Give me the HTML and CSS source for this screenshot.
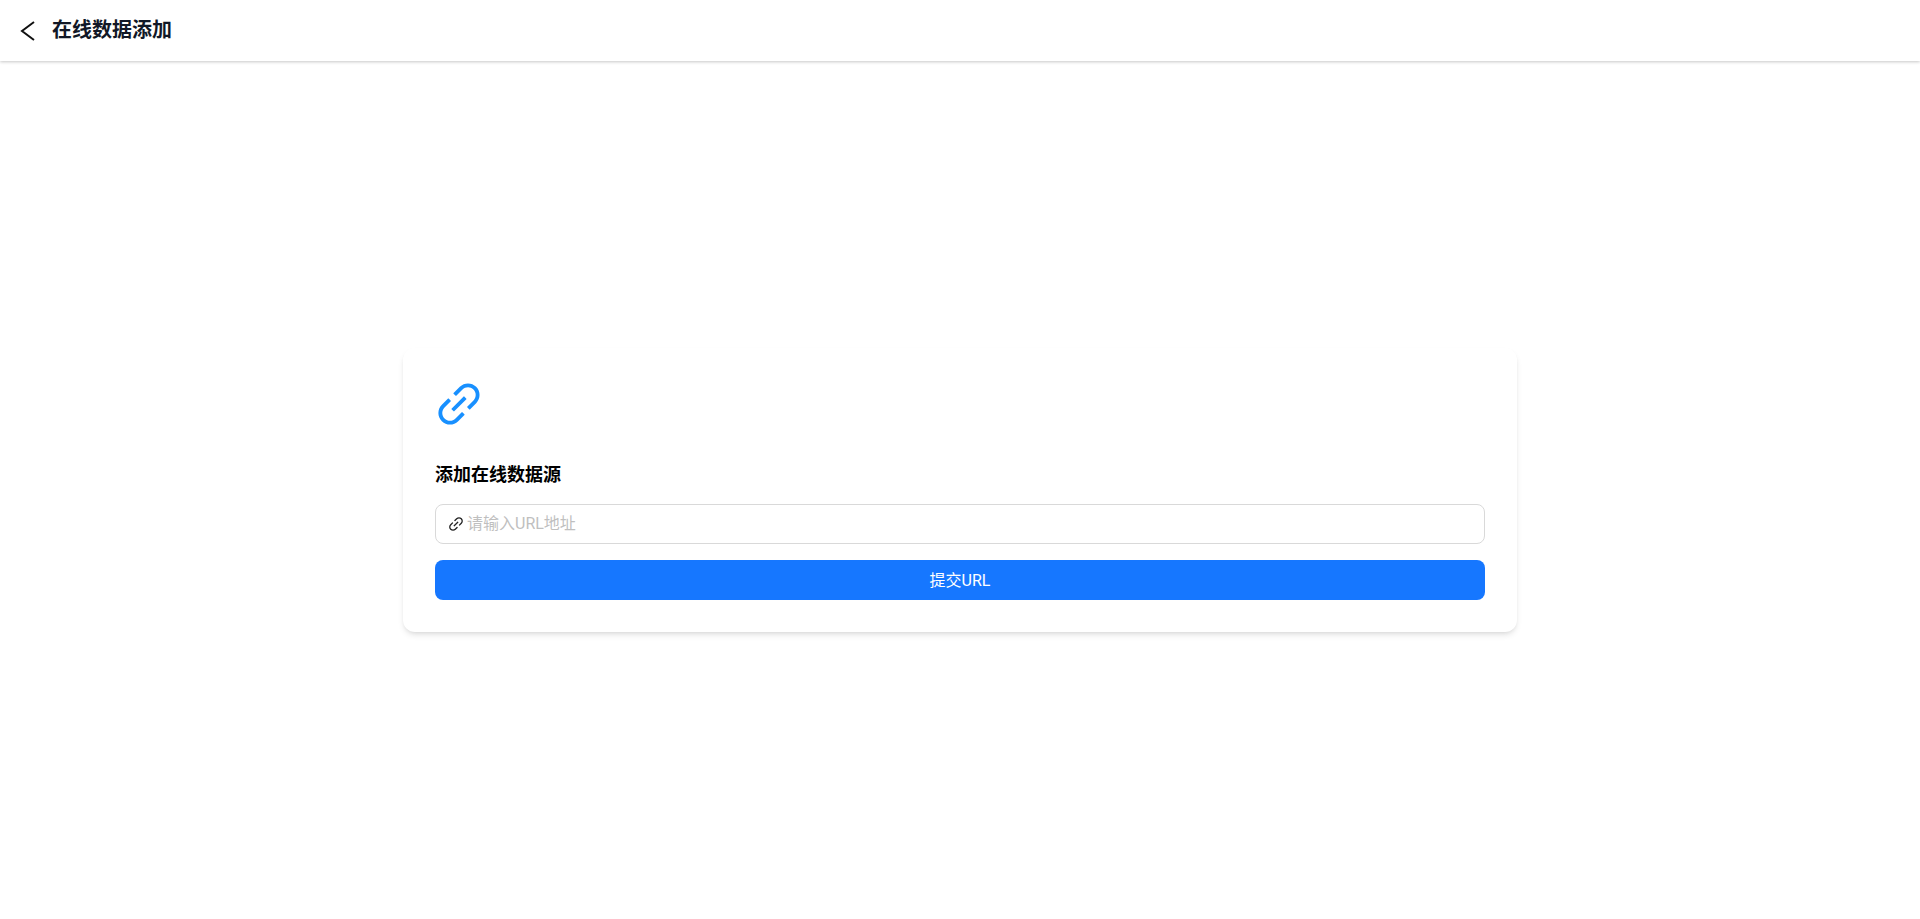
FILE: index.html
```html
<!DOCTYPE html>
<html lang="zh-CN">
	<head>
		<title>在线数据添加</title>
		<meta charset="utf-8" name="viewport" content="width=device-width, initial-scale=1">
		<link rel="stylesheet" href="styles.css">
	</head>
	<body>
		<header class="topbar">
			<button class="backbtn" aria-label="返回">
				<svg class="backicon" viewBox="0 0 15 22"><polyline points="14,2 2,11 14,20"></polyline></svg>
			</button>
			<span class="pagetitle">在线数据添加</span>
		</header>
		<main class="content">
			<section class="card">
				<svg class="cardicon" viewBox="64 64 896 896"><path d="M574 665.4a8.03 8.03 0 0 0-11.3 0L446.5 781.6c-53.8 53.8-144.6 59.5-204 0-59.5-59.5-53.8-150.2 0-204l116.2-116.2c3.1-3.1 3.1-8.2 0-11.3l-39.8-39.8a8.03 8.03 0 0 0-11.3 0L191.4 526.5c-84.6 84.6-84.6 221.5 0 306s221.5 84.6 306 0l116.2-116.2c3.1-3.1 3.1-8.2 0-11.3L574 665.4zm258.6-474c-84.6-84.6-221.5-84.6-306 0L410.3 307.6a8.03 8.03 0 0 0 0 11.3l39.7 39.7c3.1 3.1 8.2 3.1 11.3 0l116.2-116.2c53.8-53.8 144.6-59.5 204 0 59.5 59.5 53.8 150.2 0 204L665.3 562.6a8.03 8.03 0 0 0 0 11.3l39.8 39.8c3.1 3.1 8.2 3.1 11.3 0l116.2-116.2c84.5-84.6 84.5-221.5 0-306.1zM610.1 372.3a8.03 8.03 0 0 0-11.3 0L372.3 598.7a8.03 8.03 0 0 0 0 11.3l39.6 39.6c3.1 3.1 8.2 3.1 11.3 0l226.4-226.4c3.1-3.1 3.1-8.2 0-11.3l-39.5-39.6z"></path></svg>
				<h2 class="cardtitle">添加在线数据源</h2>
				<label class="urlfield">
					<svg class="fieldicon" viewBox="64 64 896 896"><path d="M574 665.4a8.03 8.03 0 0 0-11.3 0L446.5 781.6c-53.8 53.8-144.6 59.5-204 0-59.5-59.5-53.8-150.2 0-204l116.2-116.2c3.1-3.1 3.1-8.2 0-11.3l-39.8-39.8a8.03 8.03 0 0 0-11.3 0L191.4 526.5c-84.6 84.6-84.6 221.5 0 306s221.5 84.6 306 0l116.2-116.2c3.1-3.1 3.1-8.2 0-11.3L574 665.4zm258.6-474c-84.6-84.6-221.5-84.6-306 0L410.3 307.6a8.03 8.03 0 0 0 0 11.3l39.7 39.7c3.1 3.1 8.2 3.1 11.3 0l116.2-116.2c53.8-53.8 144.6-59.5 204 0 59.5 59.5 53.8 150.2 0 204L665.3 562.6a8.03 8.03 0 0 0 0 11.3l39.8 39.8c3.1 3.1 8.2 3.1 11.3 0l116.2-116.2c84.5-84.6 84.5-221.5 0-306.1zM610.1 372.3a8.03 8.03 0 0 0-11.3 0L372.3 598.7a8.03 8.03 0 0 0 0 11.3l39.6 39.6c3.1 3.1 8.2 3.1 11.3 0l226.4-226.4c3.1-3.1 3.1-8.2 0-11.3l-39.5-39.6z"></path></svg>
					<input class="urlinput" type="text" placeholder="请输入URL地址">
				</label>
				<button class="submitbtn">提交URL</button>
			</section>
		</main>
	</body>
</html>
```

FILE: styles.css
```css
* {box-sizing: border-box}

/* Full window column: header on top, card centred in the rest */
html, body {
	height: 100%;
	margin: 0;
	font-family: Roboto, "Noto Sans CJK SC", sans-serif;
	background-color: white;
}

body {
	display: flex;
	flex-direction: column;
}

.topbar {
	display: flex;
	align-items: center;
	height: 61px;
	padding-left: 20px;
	box-shadow: 0 1px 3px rgba(0, 0, 0, 0.22);
}

.backbtn {
	display: flex;
	padding: 0;
	margin-right: 17px;
	border: none;
	background: none;
	cursor: pointer;
}

.backicon {
	width: 15px;
	height: 22px;
	fill: none;
	stroke: #111111;
	stroke-width: 2;
}

.pagetitle {
	padding-bottom: 2px;
	font-size: 20px;
	font-weight: 600;
	line-height: 28px;
	color: #111827;
}

.content {
	flex: 1;
	display: flex;
	align-items: center;
	justify-content: center;
}

.card {
	display: flex;
	flex-direction: column;
	width: 1114px;
	padding: 32px;
	border-radius: 12px;
	background-color: white;
	box-shadow: 0 4px 6px -1px rgba(0, 0, 0, 0.1), 0 2px 4px -2px rgba(0, 0, 0, 0.1);
}

.cardicon {
	width: 48px;
	height: 48px;
	margin-bottom: 32px;
	fill: #1890ff;
}

.cardtitle {
	margin: 0 0 15px 0;
	padding-top: 1px;
	font-size: 18px;
	font-weight: 600;
	line-height: 28px;
	color: black;
}

.urlfield {
	display: flex;
	align-items: center;
	gap: 3px;
	height: 40px;
	padding: 0 12px;
	margin-bottom: 16px;
	border: 1px solid #d9d9d9;
	border-radius: 8px;
}

.fieldicon {
	width: 16px;
	height: 16px;
	fill: #222222;
}

.urlinput {
	flex: 1;
	padding: 0 0 2px 0;
	border: none;
	outline: none;
	font-family: inherit;
	font-size: 16px;
}

.urlinput::placeholder {
	color: #bfbfbf;
}

.submitbtn {
	height: 40px;
	padding-bottom: 4px;
	border: none;
	border-radius: 8px;
	background-color: #1677ff;
	color: white;
	font-family: inherit;
	font-size: 16px;
	cursor: pointer;
}
```
